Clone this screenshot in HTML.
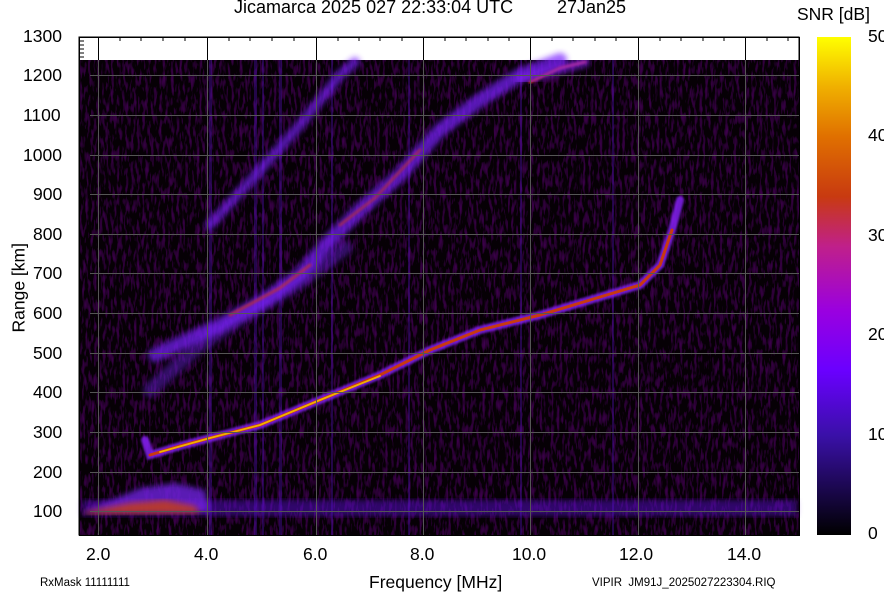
<!DOCTYPE html>
<html><head><style>
html,body{margin:0;padding:0;background:#fff;}
body{width:884px;height:595px;overflow:hidden;position:relative;font-family:"Liberation Sans",sans-serif;}
.t{position:absolute;font-size:17.5px;color:#000;white-space:nowrap;}
.s{position:absolute;font-size:11.5px;color:#000;white-space:nowrap;}
</style></head><body>
<svg width="884" height="595" style="position:absolute;left:0;top:0">
<defs>
<linearGradient id="cb" x1="0" y1="1" x2="0" y2="0">
<stop offset="0" stop-color="#000"/>
<stop offset="0.2" stop-color="#3a10a8"/>
<stop offset="0.33" stop-color="#6a00ff"/>
<stop offset="0.45" stop-color="#9a00e0"/>
<stop offset="0.58" stop-color="#c0208a"/>
<stop offset="0.68" stop-color="#c83a10"/>
<stop offset="0.8" stop-color="#e07000"/>
<stop offset="0.9" stop-color="#f0b000"/>
<stop offset="1" stop-color="#ffff00"/>
</linearGradient>
<filter id="noise" x="0" y="0" width="100%" height="100%">
<feTurbulence type="fractalNoise" baseFrequency="0.35 0.08" numOctaves="2" seed="4"/>
<feColorMatrix type="matrix" values="0 0 0 0.9 -0.45  0 0 0 0 0  0 0 0 1.6 -0.8  0 0 0 0 1"/>
</filter>
<filter id="b2"><feGaussianBlur stdDeviation="3"/></filter>
<filter id="b1"><feGaussianBlur stdDeviation="1"/></filter>
</defs>
<rect x="79" y="37" width="720" height="498" fill="#fff" stroke="#000"/>
<rect x="79" y="60" width="720" height="475" fill="#0a0008"/>
<rect x="79" y="60" width="720" height="475" filter="url(#noise)" opacity="0.35"/>
<g fill="#5010b0" opacity="0.4">
<rect x="254" y="60" width="3" height="475"/><rect x="262" y="60" width="2" height="475"/>
<rect x="279" y="60" width="3" height="475"/><rect x="331" y="60" width="2" height="475"/>
<rect x="209" y="60" width="3" height="475"/><rect x="408" y="60" width="2" height="475"/>
<rect x="520" y="60" width="2" height="475"/><rect x="612" y="60" width="2" height="475"/>
</g>
<rect x="82" y="500" width="715" height="16" fill="#5a10d0" opacity="0.5" filter="url(#b2)"/>
<path d="M82 512 L100 505 L140 488 L175 483 L205 490 L210 512 Z" fill="#7020e0" filter="url(#b2)" opacity="0.8"/>
<path d="M85 512 L130 503 L165 500 L195 506 L200 513 L85 514Z" fill="#c84010" filter="url(#b2)" opacity="0.8"/>
<g fill="none" stroke-linecap="round">
<path d="M150 390 L200 345 L250 312 L300 282 L345 248" stroke="#6a20e0" stroke-width="14" opacity="0.45" filter="url(#b2)"/>
<path d="M155 355 L220 325 L265 300 L300 275 L330 240 L360 210 L400 175 L440 130 L480 100 L520 75 L560 60" stroke="#7a20ff" stroke-width="14" opacity="0.7" filter="url(#b2)"/>
<path d="M230 315 L280 288 L310 265" stroke="#c03030" stroke-width="3" filter="url(#b1)" opacity="0.7"/>
<path d="M340 225 L375 198 L420 150" stroke="#c03030" stroke-width="3" filter="url(#b1)" opacity="0.6"/>
<path d="M210 225 L260 170 L300 125 L340 75 L355 62" stroke="#7a20ff" stroke-width="10" opacity="0.65" filter="url(#b2)"/>
<path d="M530 82 L560 68 L585 62" stroke="#c03030" stroke-width="3" filter="url(#b1)"/>
<path d="M520 80 L585 62" stroke="#8a20ff" stroke-width="10" opacity="0.6" filter="url(#b2)"/>
<path d="M145 440 L150 455 L180 446 L210 438 L260 425 L320 400 L380 375 L430 350 L480 330 L540 315 L600 297 L640 285 L660 265 L672 230 L680 200" stroke="#8a20ff" stroke-width="8" opacity="0.8" filter="url(#b1)"/>
<path d="M150 455 L180 446 L210 438 L260 425 L320 400 L380 375 L430 350 L480 330 L540 315 L600 297 L640 285 L660 265 L672 230" stroke="#c83a10" stroke-width="3"/>
<path d="M160 452 L210 438 L260 425 L320 400 L380 376" stroke="#f0b000" stroke-width="1.8"/>
</g>
<g stroke="#555" stroke-width="1">
<line x1="98.5" y1="37" x2="98.5" y2="535"/><line x1="207.5" y1="37" x2="207.5" y2="535"/>
<line x1="316.5" y1="37" x2="316.5" y2="535"/><line x1="423.5" y1="37" x2="423.5" y2="535"/>
<line x1="530.5" y1="37" x2="530.5" y2="535"/><line x1="638.5" y1="37" x2="638.5" y2="535"/>
<line x1="745.5" y1="37" x2="745.5" y2="535"/>
<line x1="90" y1="75.5" x2="799" y2="75.5"/><line x1="90" y1="115.5" x2="799" y2="115.5"/>
<line x1="90" y1="155.5" x2="799" y2="155.5"/><line x1="90" y1="194.5" x2="799" y2="194.5"/>
<line x1="90" y1="234.5" x2="799" y2="234.5"/><line x1="90" y1="273.5" x2="799" y2="273.5"/>
<line x1="90" y1="313.5" x2="799" y2="313.5"/><line x1="90" y1="353.5" x2="799" y2="353.5"/>
<line x1="90" y1="392.5" x2="799" y2="392.5"/><line x1="90" y1="432.5" x2="799" y2="432.5"/>
<line x1="90" y1="472.5" x2="799" y2="472.5"/><line x1="90" y1="511.5" x2="799" y2="511.5"/>
</g>
<g stroke="#000"><line x1="98.5" y1="37" x2="98.5" y2="60"/><line x1="207.5" y1="37" x2="207.5" y2="60"/><line x1="316.5" y1="37" x2="316.5" y2="60"/><line x1="423.5" y1="37" x2="423.5" y2="60"/><line x1="530.5" y1="37" x2="530.5" y2="60"/><line x1="638.5" y1="37" x2="638.5" y2="60"/><line x1="745.5" y1="37" x2="745.5" y2="60"/></g>
<path d="M120 37v4M141 37v4M163 37v4M185 37v4M229 37v4M250 37v4M272 37v4M294 37v4M338 37v4M359 37v4M380 37v4M402 37v4M445 37v4M466 37v4M488 37v4M509 37v4M552 37v4M573 37v4M595 37v4M616 37v4M660 37v4M681 37v4M703 37v4M724 37v4M767 37v4M788 37v4M79 41h5M79 45h5M79 49h5M79 53h5M79 57h5" stroke="#000"/>
<rect x="79.5" y="37.5" width="720" height="498" fill="none" stroke="#000"/>
<rect x="817" y="37" width="34" height="498" fill="url(#cb)"/>
</svg>
<div class="t" style="left:234px;top:-3px;font-size:18px">Jicamarca 2025 027 22:33:04 UTC</div>
<div class="t" style="left:557px;top:-3px;font-size:18px">27Jan25</div>
<div class="t" style="left:797px;top:4px">SNR [dB]</div>
<div class="t" style="left:23px;top:26px">1300</div>
<div class="t" style="left:23px;top:65px">1200</div>
<div class="t" style="left:23px;top:105px">1100</div>
<div class="t" style="left:23px;top:145px">1000</div>
<div class="t" style="left:33px;top:184px">900</div>
<div class="t" style="left:33px;top:224px">800</div>
<div class="t" style="left:33px;top:263px">700</div>
<div class="t" style="left:33px;top:303px">600</div>
<div class="t" style="left:33px;top:343px">500</div>
<div class="t" style="left:33px;top:382px">400</div>
<div class="t" style="left:33px;top:422px">300</div>
<div class="t" style="left:33px;top:462px">200</div>
<div class="t" style="left:33px;top:501px">100</div>
<div class="t" style="left:-21px;top:282px;transform:rotate(-90deg);transform-origin:center;width:80px;text-align:center">Range [km]</div>
<div class="t" style="left:86px;top:544px">2.0</div>
<div class="t" style="left:194px;top:544px">4.0</div>
<div class="t" style="left:303px;top:544px">6.0</div>
<div class="t" style="left:410px;top:544px">8.0</div>
<div class="t" style="left:512px;top:544px">10.0</div>
<div class="t" style="left:619px;top:544px">12.0</div>
<div class="t" style="left:727px;top:544px">14.0</div>
<div class="t" style="left:369px;top:572px">Frequency [MHz]</div>
<div class="s" style="left:40px;top:577px">RxMask 11111111</div>
<div class="s" style="left:592px;top:577px">VIPIR&nbsp;&nbsp;JM91J_2025027223304.RIQ</div>
<div class="t" style="left:868px;top:26px">50</div>
<div class="t" style="left:868px;top:125px">40</div>
<div class="t" style="left:868px;top:225px">30</div>
<div class="t" style="left:868px;top:324px">20</div>
<div class="t" style="left:868px;top:424px">10</div>
<div class="t" style="left:868px;top:523px">0</div>
</body></html>
